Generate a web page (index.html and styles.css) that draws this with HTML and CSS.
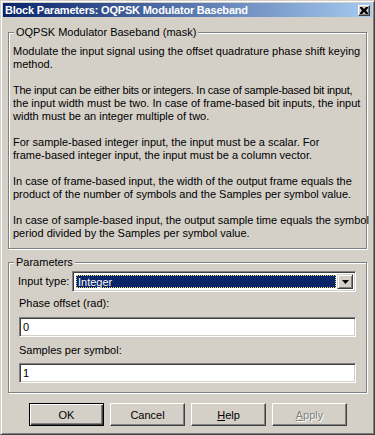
FILE: index.html
```html
<!DOCTYPE html>
<html>
<head>
<meta charset="utf-8">
<title>Block Parameters: OQPSK Modulator Baseband</title>
<link rel="stylesheet" href="styles.css">
</head>
<body>
<div class="window">
  <div class="titlebar">
    <span class="title">Block Parameters: OQPSK Modulator Baseband</span>
    <span class="close"><svg width="8" height="7" viewBox="0 0 8 7"><path d="M0 0h2l2 2 2-2h2v1L6 3.5 8 6v1H6L4 5 2 7H0V6l2-2.5L0 1z" fill="#000"/></svg></span>
  </div>
  <div class="content">
    <fieldset class="group desc">
      <legend>OQPSK Modulator Baseband (mask)</legend>
      <p>Modulate the input signal using the offset quadrature phase shift keying<br>method.</p>
      <p><span class="tight">The input can be either bits or integers. In case of sample-based bit input,</span><br>the input width must be two. In case of frame-based bit inputs, the input<br>width must be an integer multiple of two.</p>
      <p>For sample-based integer input, the input must be a scalar. For<br>frame-based integer input, the input must be a column vector.</p>
      <p>In case of frame-based input, the width of the output frame equals the<br>product of the number of symbols and the Samples per symbol value.</p>
      <p>In case of sample-based input, the output sample time equals the symbol<br>period divided by the Samples per symbol value.</p>
    </fieldset>
    <fieldset class="group params">
      <legend>Parameters</legend>
      <div class="row">
        <span class="row-label">Input type:</span>
        <div class="combo">
          <div class="sel"><span class="focus">Integer</span></div>
          <div class="arrow"><svg width="7" height="4" viewBox="0 0 7 4"><path d="M0 0h7L3.5 4z" fill="#000"/></svg></div>
        </div>
      </div>
      <div class="label">Phase offset (rad):</div>
      <div class="field">0</div>
      <div class="label label-2">Samples per symbol:</div>
      <div class="field">1</div>
    </fieldset>
    <div class="buttons">
      <button class="btn default">OK</button>
      <button class="btn">Cancel</button>
      <button class="btn"><u>H</u>elp</button>
      <button class="btn disabled"><u>A</u>pply</button>
    </div>
  </div>
</div>
</body>
</html>
```
FILE: styles.css
```css
* { box-sizing: border-box; }
html, body { margin: 0; padding: 0; }
body {
  width: 375px;
  height: 435px;
  overflow: hidden;
  background: #d4d0c8;
  font-family: "Liberation Sans", Arial, sans-serif;
  font-size: 11px;
  color: #000;
}
.window {
  width: 375px;
  height: 435px;
  background: #d4d0c8;
  border: 1px solid;
  border-color: #d4d0c8 #404040 #404040 #d4d0c8;
  box-shadow: inset 1px 1px #fff, inset -1px -1px #808080;
  padding: 2px;
  display: flex;
  flex-direction: column;
}
.titlebar {
  height: 14px;
  background: linear-gradient(to right, #0a246a, #a6caf0);
  display: flex;
  align-items: center;
  justify-content: space-between;
  padding: 0 2px 0 2px;
}
.title {
  color: #fff;
  font-weight: bold;
  font-size: 11px;
  line-height: 14px;
  letter-spacing: -0.2px;
  white-space: nowrap;
}
.close {
  width: 12px;
  height: 11px;
  background: #d4d0c8;
  border: 1px solid;
  border-color: #fff #404040 #404040 #fff;
  box-shadow: inset -1px -1px #808080;
  display: flex;
  align-items: center;
  justify-content: center;
}
.close svg { display: block; }
.content {
  flex: 1;
  padding: 0 5px;
  display: flex;
  flex-direction: column;
}
.group {
  margin: 0;
  min-width: 0;
  border: 1px solid #808080;
  box-shadow: inset 1px 1px #fff, 1px 1px #fff;
}
.group legend {
  background: #d4d0c8;
  padding: 0 2px;
  line-height: 13px;
  font-size: 11px;
}
.desc {
  margin-top: 9px;
  padding: 6px 4px 8px 4px;
}
.desc legend { margin-left: 1px; }
.desc p {
  margin: 0 0 13px;
  line-height: 13px;
  white-space: nowrap;
}
.desc p:last-child { margin-bottom: 0; }
.tight { letter-spacing: -0.25px; }
.params {
  margin-top: 7px;
  padding: 2px 10px 9px 10px;
}
.params legend { margin-left: -5px; }
.row {
  display: flex;
  align-items: center;
}
.row-label {
  width: 54px;
  margin-left: -1px;
  line-height: 13px;
}
.combo {
  flex: 1;
  height: 21px;
  background: #fff;
  border: 1px solid;
  border-color: #808080 #fff #fff #808080;
  box-shadow: inset 1px 1px #404040, inset -1px -1px #d4d0c8;
  padding: 2px;
  display: flex;
}
.sel {
  flex: 1;
  padding: 1px;
  display: flex;
}
.focus {
  flex: 1;
  background: #0a246a;
  color: #fff;
  border: 1px dotted #e8e070;
  line-height: 13px;
  padding-left: 1px;
}
.arrow {
  width: 16px;
  background: #d4d0c8;
  border: 1px solid;
  border-color: #d4d0c8 #404040 #404040 #d4d0c8;
  box-shadow: inset 1px 1px #fff, inset -1px -1px #808080;
  display: flex;
  align-items: center;
  justify-content: center;
}
.arrow svg { display: block; }
.label {
  line-height: 13px;
  margin-top: 5px;
  margin-bottom: 7px;
}
.label-2 {
  margin-top: 7px;
  margin-bottom: 6px;
}
.field {
  height: 20px;
  background: #fff;
  border: 1px solid;
  border-color: #808080 #fff #fff #808080;
  box-shadow: inset 1px 1px #404040, inset -1px -1px #d4d0c8;
  padding: 0 3px;
  line-height: 18px;
}
.buttons {
  display: flex;
  gap: 6px;
  margin-top: 10px;
  padding-left: 21px;
}
.btn {
  width: 75px;
  height: 23px;
  margin: 0;
  padding: 0;
  background: #d4d0c8;
  font-family: "Liberation Sans", Arial, sans-serif;
  font-size: 11px;
  color: #000;
  border: 1px solid;
  border-color: #fff #404040 #404040 #fff;
  box-shadow: inset -1px -1px #808080;
}
.btn.default {
  border-color: #000;
  box-shadow: inset 1px 1px #fff, inset -1px -1px #404040, inset -2px -2px #808080;
}
.btn.disabled {
  color: #808080;
  text-shadow: 1px 1px #fff;
}
```
